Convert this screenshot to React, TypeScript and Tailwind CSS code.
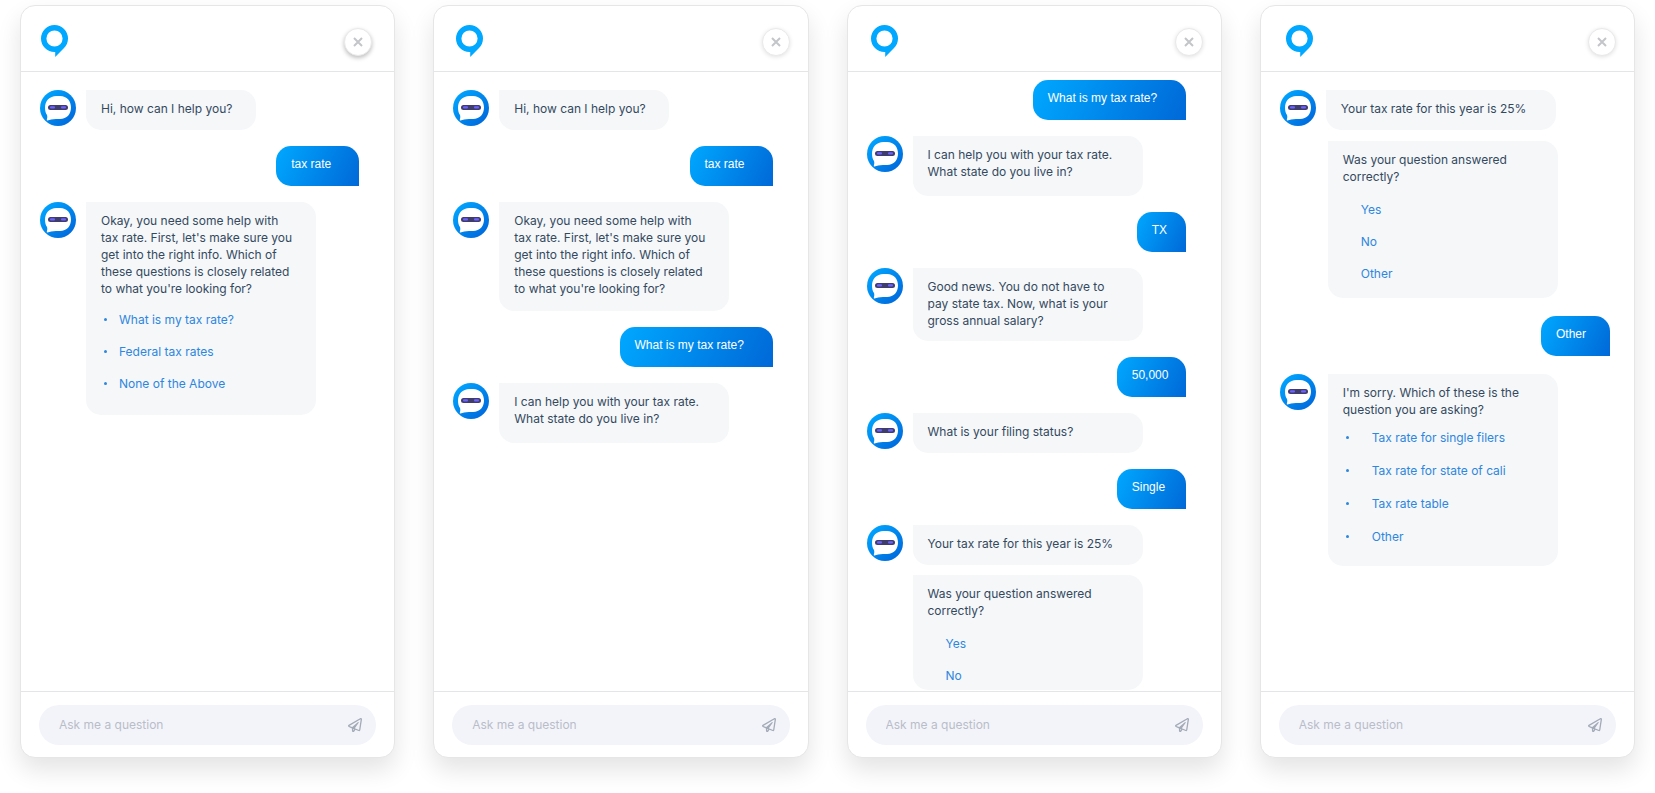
import { FaRegPaperPlane } from "react-icons/fa";

type Message = {
  from: "bot" | "user";
  text: string;
  // size and spacing of the bubble
  className?: string;
  options?: string[];
  listClassName?: string;
  itemClassName?: string;
  bullets?: boolean;
  hideAvatar?: boolean;
};

type Chat = {
  id: string;
  headerClassName: string;
  closeClassName: string;
  bodyClassName: string;
  messages: Message[];
};

const OKAY =
  "Okay, you need some help with tax rate. First, let's make sure you get into the right info. Which of these questions is closely related to what you're looking for?";

const chats: Chat[] = [
  {
    id: "start",
    headerClassName: "pl-5 pr-[22px]",
    closeClassName: "shadow-[0_2px_4px_rgba(0,0,0,0.25)]",
    bodyClassName: "gap-4 pt-[18px] pr-[35px]",
    messages: [
      { from: "bot", text: "Hi, how can I help you?", className: "w-[170px] pb-[13px]" },
      { from: "user", text: "tax rate", className: "w-[83px]" },
      {
        from: "bot",
        text: OKAY,
        className: "w-[230px] pb-4",
        options: ["What is my tax rate?", "Federal tax rates", "None of the Above"],
        listClassName: "mt-1.5",
        itemClassName: "h-8 gap-3",
        bullets: true,
      },
    ],
  },
  {
    id: "tax-rate",
    headerClassName: "pl-[22px] pr-[18px]",
    closeClassName: "shadow-[0_1px_4px_rgba(0,0,0,0.12)]",
    bodyClassName: "gap-4 pt-[18px] pr-[35px]",
    messages: [
      { from: "bot", text: "Hi, how can I help you?", className: "w-[170px] pb-[13px]" },
      { from: "user", text: "tax rate", className: "w-[83px]" },
      { from: "bot", text: OKAY, className: "w-[230px] pb-3.5" },
      { from: "user", text: "What is my tax rate?", className: "w-[153px]" },
      {
        from: "bot",
        text: "I can help you with your tax rate. What state do you live in?",
        className: "w-[230px] pb-4",
      },
    ],
  },
  {
    id: "answers",
    headerClassName: "pl-[23px] pr-[18px]",
    closeClassName: "shadow-[0_1px_4px_rgba(0,0,0,0.12)]",
    bodyClassName: "gap-4 pt-2 pr-[35px]",
    messages: [
      { from: "user", text: "What is my tax rate?", className: "w-[153px]" },
      {
        from: "bot",
        text: "I can help you with your tax rate. What state do you live in?",
        className: "w-[230px] pb-4",
      },
      { from: "user", text: "TX", className: "w-[49px]" },
      {
        from: "bot",
        text: "Good news. You do not have to pay state tax. Now, what is your gross annual salary?",
        className: "w-[230px] pb-3",
      },
      { from: "user", text: "50,000", className: "w-[69px]" },
      { from: "bot", text: "What is your filing status?", className: "w-[230px] pb-[13px]" },
      { from: "user", text: "Single", className: "w-[69px]" },
      { from: "bot", text: "Your tax rate for this year is 25%", className: "w-[230px] pb-[13px]" },
      {
        from: "bot",
        text: "Was your question answered correctly?",
        className: "w-[230px] h-[115px] -mt-1.5",
        options: ["Yes", "No"],
        listClassName: "mt-2 pl-[18px]",
        itemClassName: "h-8",
        hideAvatar: true,
      },
    ],
  },
  {
    id: "feedback",
    headerClassName: "pl-[25px] pr-[18px]",
    closeClassName: "shadow-[0_1px_4px_rgba(0,0,0,0.12)]",
    bodyClassName: "gap-[18px] pt-[18px] pr-6",
    messages: [
      { from: "bot", text: "Your tax rate for this year is 25%", className: "w-[230px] pb-[13px]" },
      {
        from: "bot",
        text: "Was your question answered correctly?",
        className: "w-[230px] -mt-[7px] ml-0.5 pb-[9px]",
        options: ["Yes", "No", "Other"],
        listClassName: "mt-2 pl-[18px]",
        itemClassName: "h-8",
        hideAvatar: true,
      },
      { from: "user", text: "Other", className: "w-[69px]" },
      {
        from: "bot",
        text: "I'm sorry. Which of these is the question you are asking?",
        className: "w-[230px] ml-0.5 pb-[13px]",
        options: ["Tax rate for single filers", "Tax rate for state of cali", "Tax rate table", "Other"],
        listClassName: "mt-[3px]",
        itemClassName: "h-[33px] gap-[23px]",
        bullets: true,
      },
    ],
  },
];

function Logo() {
  return (
    <svg width="27" height="33" viewBox="0 0 27 33" aria-hidden="true">
      <path
        fill="#00a8ff"
        fillRule="evenodd"
        d="M13.5 0A13.5 13.5 0 0 1 27 13.5c0 4-1.6 7.2-4.2 9.7L14.2 32v-5h-.7a13.5 13.5 0 0 1 0-27Zm0 5.4a8.1 8.1 0 1 0 0 16.2 8.1 8.1 0 0 0 0-16.2Z"
      />
    </svg>
  );
}

function Avatar({ id }: { id: string }) {
  return (
    <svg width="36" height="36" viewBox="0 0 36 36" className="shrink-0" aria-hidden="true">
      <defs>
        <linearGradient id={id} x1="0" y1="0" x2="1" y2="1">
          <stop offset="0.1" stopColor="#00a5ff" />
          <stop offset="0.9" stopColor="#0069dc" />
        </linearGradient>
      </defs>
      <circle cx="18" cy="18" r="18" fill={`url(#${id})`} />
      <path
        fill="#fff"
        d="M16.500 6h3.500c7 0 11 5 11 11.500S27 29 20 29h-4c-4 0-6 .8-8.500 1.500-.6.2-.9-.2-.7-.8.5-1.600.7-3 .2-4.700C5.600 23 5 21 5 17.500 5 11 9.500 6 16.500 6Z"
      />
      <rect x="8" y="15" width="20" height="5" rx="2.500" fill="#3f3d70" />
      <rect x="10" y="16.200" width="5" height="2.400" rx="1" fill="#6c63ff" />
      <rect x="21" y="16.200" width="5" height="2.400" rx="1" fill="#6c63ff" />
    </svg>
  );
}

function UserBubble({ message }: { message: Message }) {
  return (
    <p
      className={`self-end rounded-[15px] rounded-br-none bg-linear-[115deg] from-[#00a8ff] to-[#0068d8] pt-2.5 pb-[13px] pl-[15px] font-['Liberation_Sans',Arial,sans-serif] text-[12px] leading-[17px] whitespace-nowrap text-white ${message.className}`}
    >
      {message.text}
    </p>
  );
}

function BotMessage({ message, id }: { message: Message; id: string }) {
  return (
    <div className="flex items-start gap-2.5">
      {message.hideAvatar ? <span className="w-9 shrink-0" /> : <Avatar id={id} />}
      <div
        className={`rounded-[15px] rounded-tl-none bg-[#f5f7f9] pt-2.5 pr-5 pl-[15px] leading-[17px] text-[#34495e] ${message.className}`}
      >
        <p>{message.text}</p>
        {message.options && (
          <ul className={message.listClassName}>
            {message.options.map((option) => (
              <li key={option} className={`flex items-center text-[#2e86de] ${message.itemClassName}`}>
                {message.bullets && <span className="ml-[3px] size-[3px] shrink-0 rounded-full bg-[#2e86de]" />}
                <button type="button">{option}</button>
              </li>
            ))}
          </ul>
        )}
      </div>
    </div>
  );
}

function ChatPanel({ chat }: { chat: Chat }) {
  return (
    <section className="flex h-[calc(100vh-40px)] min-w-0 flex-1 flex-col overflow-hidden rounded-[15px] border border-[#e6e6e6] bg-white shadow-[0_12px_24px_rgba(0,0,0,0.11)]">
      <header
        className={`flex h-[66px] shrink-0 items-center justify-between border-b border-[#e4e5e6] pt-1.5 ${chat.headerClassName}`}
      >
        <Logo />
        <button
          type="button"
          aria-label="Close chat"
          className={`flex size-7 items-center justify-center rounded-full border border-[#e9e9e9] bg-white ${chat.closeClassName}`}
        >
          <svg width="10" height="10" viewBox="0 0 10 10" stroke="#c3c5c8" strokeWidth="2" aria-hidden="true">
            <path d="M1 1l8 8M9 1l-8 8" />
          </svg>
        </button>
      </header>

      <div className={`flex min-h-0 flex-1 flex-col overflow-hidden pl-[19px] ${chat.bodyClassName}`}>
        {chat.messages.map((message, i) =>
          message.from === "user" ? (
            <UserBubble key={i} message={message} />
          ) : (
            <BotMessage key={i} message={message} id={`${chat.id}-${i}`} />
          )
        )}
      </div>

      <footer className="shrink-0 border-t border-[#e4e5e6] px-[18px] pt-[13px] pb-3">
        <form className="flex h-10 items-center rounded-full bg-[#f3f4f9] pr-3.5 pl-5">
          <input
            type="text"
            aria-label="Ask me a question"
            placeholder="Ask me a question"
            className="min-w-0 flex-1 bg-transparent outline-none placeholder:text-[#b9bdc9]"
          />
          <button type="submit" aria-label="Send" className="text-[#a3abb8]">
            <FaRegPaperPlane size={14} />
          </button>
        </form>
      </footer>
    </section>
  );
}

export default function App() {
  return (
    <main className="flex min-h-screen items-start gap-[38px] bg-white px-5 pt-[5px] font-['Inter',sans-serif] text-[12px]">
      {chats.map((chat) => (
        <ChatPanel key={chat.id} chat={chat} />
      ))}
    </main>
  );
}
